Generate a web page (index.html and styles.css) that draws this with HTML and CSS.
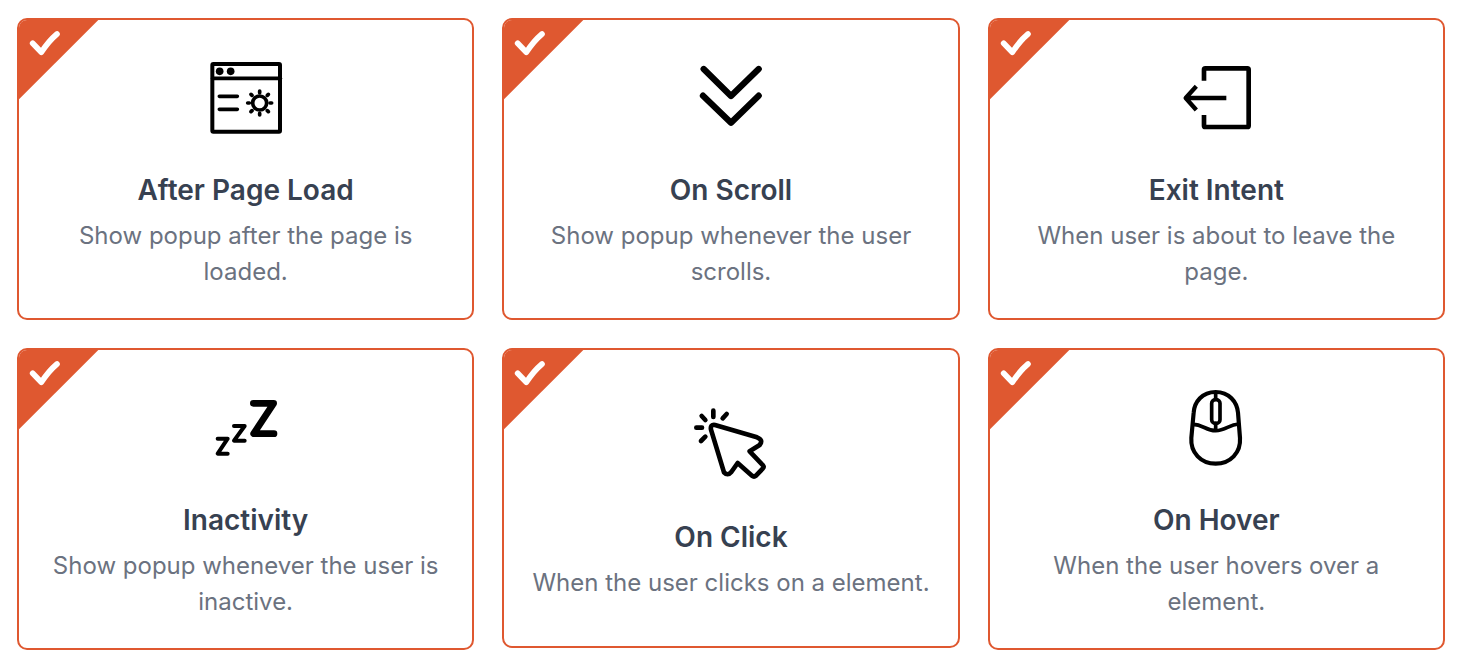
FILE: index.html
```html
<!DOCTYPE html>
<html lang="en">
  <head>
    <meta charset="UTF-8" />
    <meta name="viewport" content="width=device-width, initial-scale=1.0" />
    <title>Popup Triggers</title>
    <link rel="stylesheet" href="styles.css">
  </head>
  <body>
    <div class="triggers">
      <div class="card">
        <svg class="ribbon" viewBox="27 30 240 240">
          <path class="corner" d="M27 30H265L27 268Z" />
          <path class="check" d="M68 100L94 127Q116 93 141 72" />
        </svg>
        <svg class="icon" viewBox="-13 -6 300 300">
          <rect x="36" y="42" width="203" height="203" rx="3" stroke-width="12" />
          <path d="M37 85H240" stroke-width="11" />
          <circle class="solid" cx="58" cy="64" r="11.5" />
          <circle class="solid" cx="91" cy="64" r="11.5" />
          <path d="M57 139H111M57 178H111" stroke-width="11" />
          <circle cx="178" cy="159" r="21" stroke-width="11" />
          <path d="M178 123V128M178 190V195M142 159H147M209 159H214M152 133L155 136M201 182L204 185M204 133L201 136M155 182L152 185" stroke-width="11" />
        </svg>
        <h3 class="title">After Page Load</h3>
        <p class="text">Show popup after the page is loaded.</p>
      </div>

      <div class="card">
        <svg class="ribbon" viewBox="27 30 240 240">
          <path class="corner" d="M27 30H265L27 268Z" />
          <path class="check" d="M68 100L94 127Q116 93 141 72" />
        </svg>
        <svg class="icon" viewBox="-12 -6 300 300">
          <path d="M56 57L138 138L221 57M54 137L138 218L221 137" stroke-width="19" />
        </svg>
        <h3 class="title">On Scroll</h3>
        <p class="text">Show popup whenever the user scrolls.</p>
      </div>

      <div class="card">
        <svg class="ribbon" viewBox="27 30 240 240">
          <path class="corner" d="M27 30H265L27 268Z" />
          <path class="check" d="M68 100L94 127Q116 93 141 72" />
        </svg>
        <svg class="icon exit" viewBox="-11 -6 300 300">
          <path d="M103 92V59Q103 55 107 55H233Q237 55 237 59V227Q237 231 233 231H107Q103 231 103 227V195" stroke-width="14" />
          <path d="M170 144H50M80 109L48 144L80 180" stroke-width="13" />
        </svg>
        <h3 class="title">Exit Intent</h3>
        <p class="text">When user is about to leave the page.</p>
      </div>

      <div class="card">
        <svg class="ribbon" viewBox="27 30 240 240">
          <path class="corner" d="M27 30H265L27 268Z" />
          <path class="check" d="M68 100L94 127Q116 93 141 72" />
        </svg>
        <svg class="icon" viewBox="-13 -21 300 300">
          <polyline points="159,55 220,55 160,146 221,146" stroke-width="20" />
          <polyline points="101,123 133,123 101,167 133,167" stroke-width="12" />
          <polyline points="52,161 82,161 52,206 82,206" stroke-width="12" />
        </svg>
        <h3 class="title">Inactivity</h3>
        <p class="text">Show popup whenever the user is inactive.</p>
      </div>

      <div class="card short">
        <svg class="ribbon" viewBox="27 30 240 240">
          <path class="corner" d="M27 30H265L27 268Z" />
          <path class="check" d="M68 100L94 127Q116 93 141 72" />
        </svg>
        <svg class="icon" viewBox="-12 0 300 300">
          <path d="M90 90L216 127Q236 135 224 150L194 169L234 211Q238 216 233 221L213 242Q207 247 201 242L158 204L139 231Q128 244 117 232L78 104Q75 88 90 90Z" stroke-width="14" />
          <path d="M85 47V66M50 63L61 75M125 57L113 70M34 98H51M61 125L48 138" stroke-width="14" />
        </svg>
        <h3 class="title">On Click</h3>
        <p class="text">When the user clicks on a element.</p>
      </div>

      <div class="card">
        <svg class="ribbon" viewBox="27 30 240 240">
          <path class="corner" d="M27 30H265L27 268Z" />
          <path class="check" d="M68 100L94 127Q116 93 141 72" />
        </svg>
        <svg class="icon" viewBox="-11 -6 300 300">
          <path d="M138 36C98 36 74 65 72 98L65 174C62 218 94 251 138 251S214 218 211 174L205 98C202 65 178 36 138 36Z" stroke-width="12.500" />
          <path d="M70 133C100 133 108 152 138 152S177 134 207 132M138 38V58M138 130V151" stroke-width="11" />
          <rect x="126" y="59" width="25" height="71" rx="11" stroke-width="11" />
        </svg>
        <h3 class="title">On Hover</h3>
        <p class="text">When the user hovers over a element.</p>
      </div>
    </div>
  </body>
</html>
```
FILE: styles.css
```css
* {
  box-sizing: border-box;
}
body {
  margin: 0;
  background-color: #fff;
  font-family: Inter, "Liberation Sans", sans-serif;
}
.triggers {
  display: grid;
  grid-template-columns: repeat(3, 1fr);
  gap: 28px;
  width: 1428px;
  margin: 18px 0 0 17px;
}
.card {
  position: relative;
  display: flex;
  flex-direction: column;
  align-items: center;
  justify-content: center;
  height: 302px;
  padding: 28px;
  border: 2px solid #df5830;
  border-radius: 10px;
  text-align: center;
}
.short {
  height: 300px;
}
.ribbon {
  position: absolute;
  top: 0;
  left: 0;
  width: 80px;
  height: 80px;
  border-top-left-radius: 8px;
}
.corner {
  fill: #df5830;
}
.check {
  fill: none;
  stroke: #fff;
  stroke-width: 17;
  stroke-linecap: round;
  stroke-linejoin: round;
}
.icon {
  width: 100px;
  height: 100px;
  margin-bottom: 24px;
  fill: none;
  stroke: #000;
  stroke-linecap: round;
  stroke-linejoin: round;
}
.exit {
  stroke-linecap: butt;
}
.icon .solid {
  fill: #000;
  stroke: none;
}
.title {
  margin: 0 0 10px;
  color: #374151;
  font-size: 28px;
  font-weight: 600;
  line-height: 36px;
}
.text {
  margin: 0;
  color: #6b7280;
  font-size: 24px;
  line-height: 36px;
}
```
